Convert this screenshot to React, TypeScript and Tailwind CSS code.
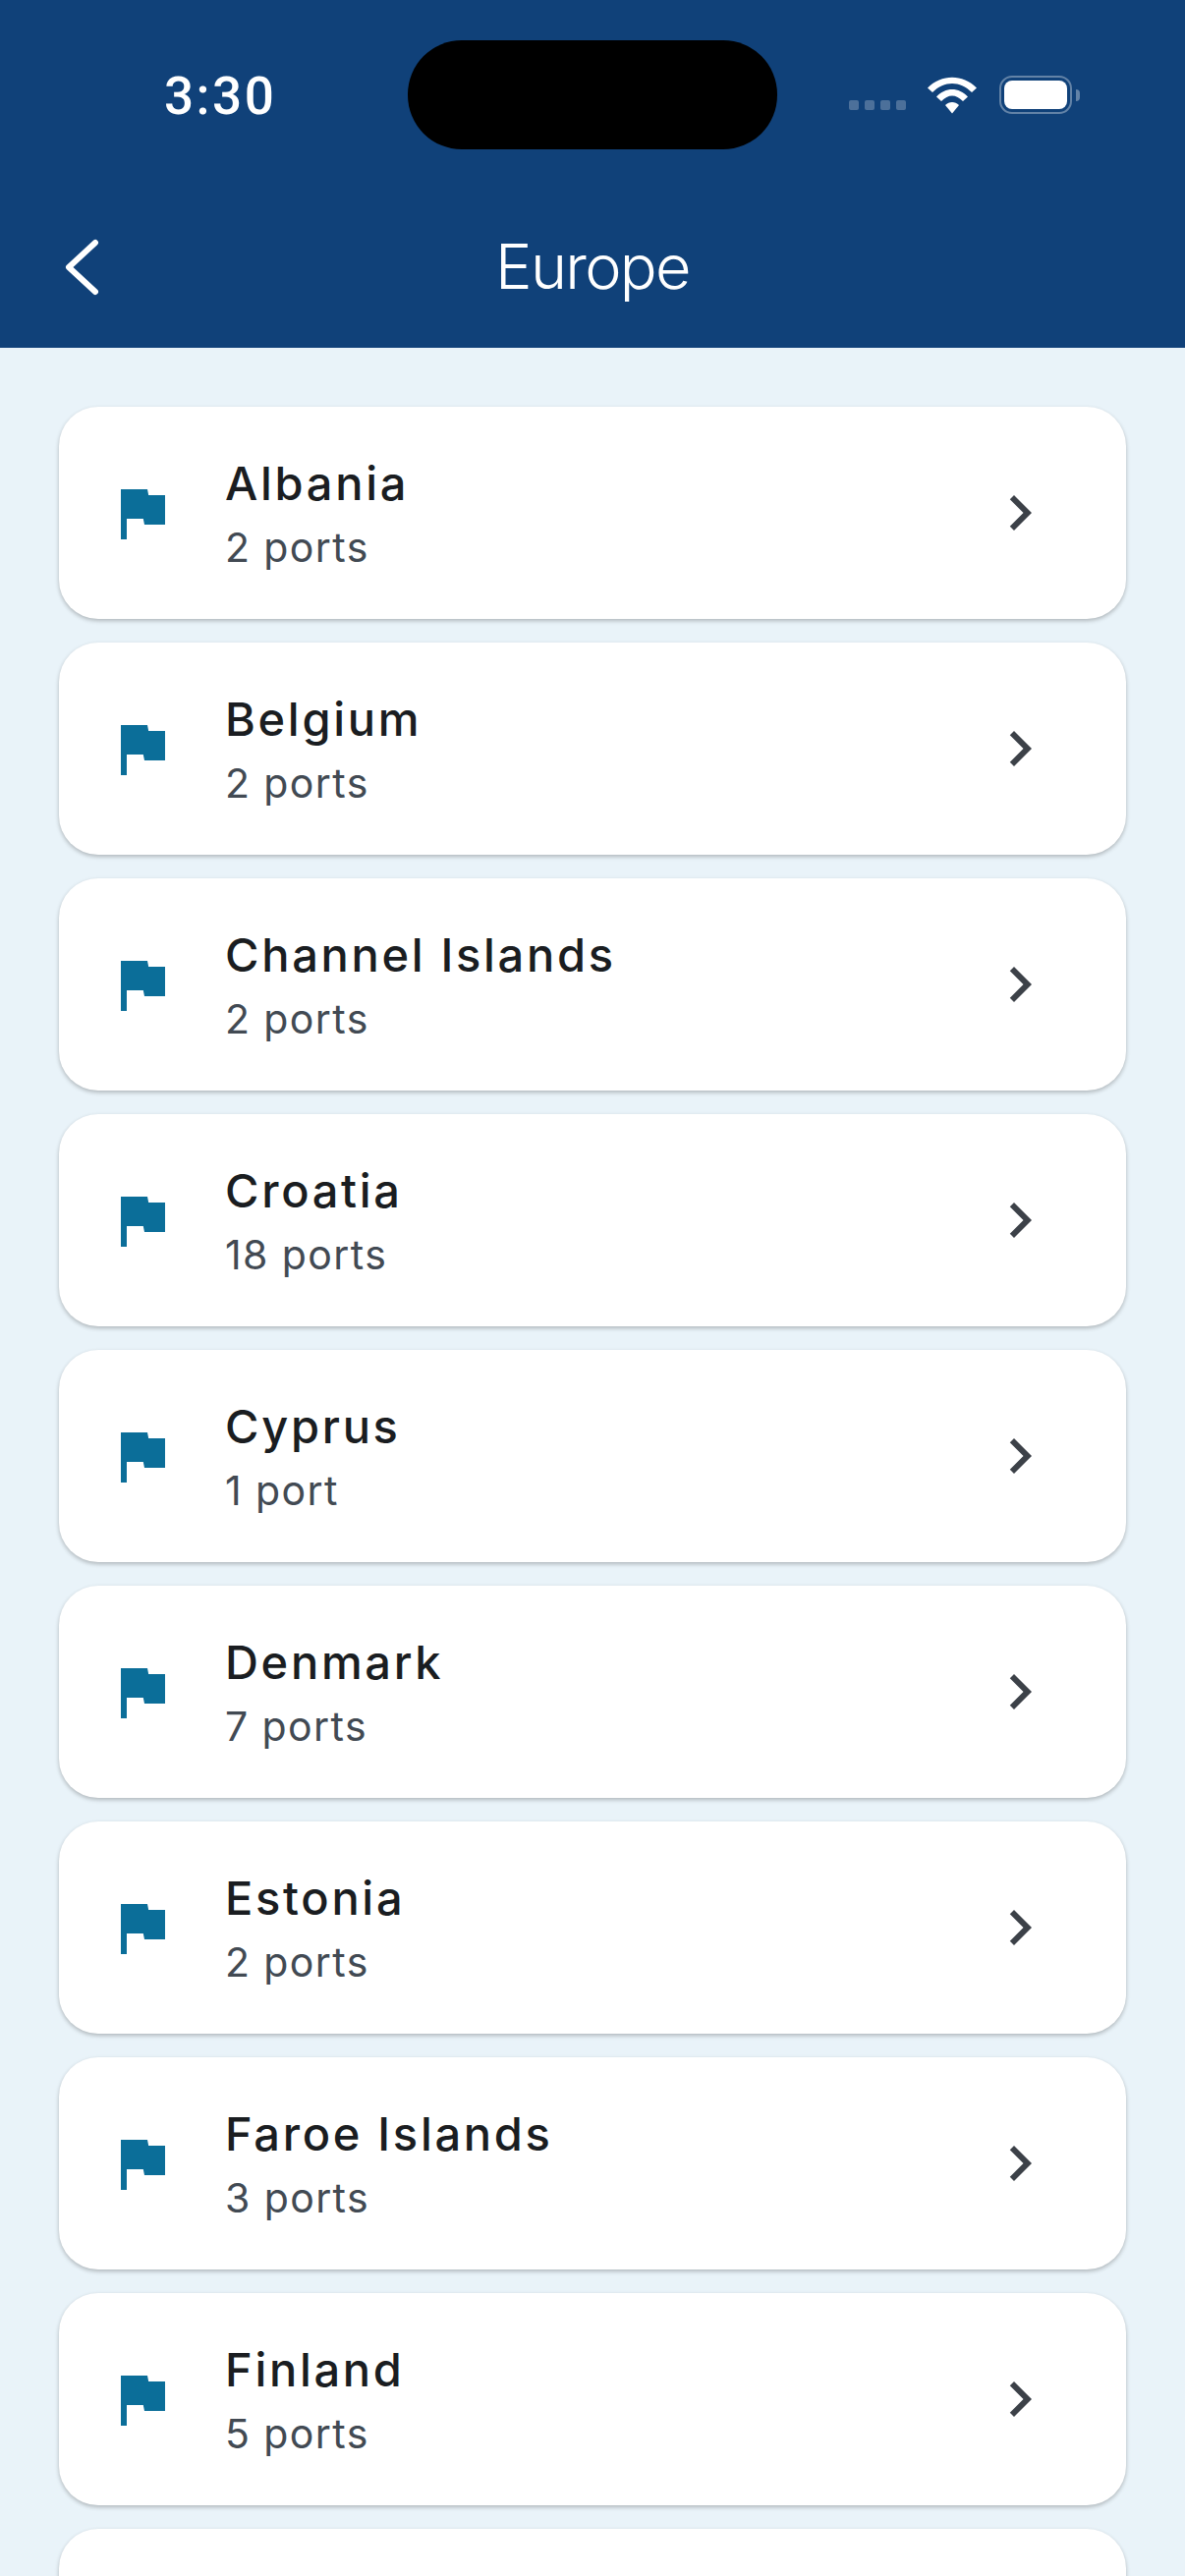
import React from 'react';

const countries = [
  { name: 'Albania', ports: '2 ports' },
  { name: 'Belgium', ports: '2 ports' },
  { name: 'Channel Islands', ports: '2 ports' },
  { name: 'Croatia', ports: '18 ports' },
  { name: 'Cyprus', ports: '1 port' },
  { name: 'Denmark', ports: '7 ports' },
  { name: 'Estonia', ports: '2 ports' },
  { name: 'Faroe Islands', ports: '3 ports' },
  { name: 'Finland', ports: '5 ports' },
];

function StatusIcons() {
  return (
    <div className="flex items-center ml-[73px]">
      {/* Signal dots */}
      <div className="flex gap-[6px] mt-[21px] mr-[22px]">
        <div className="w-[10px] h-[10px] rounded-[2px] bg-white/25" />
        <div className="w-[10px] h-[10px] rounded-[2px] bg-white/25" />
        <div className="w-[10px] h-[10px] rounded-[2px] bg-white/25" />
        <div className="w-[10px] h-[10px] rounded-[2px] bg-white/25" />
      </div>
      <svg width="50" height="38" viewBox="0 0 50 38" className="mr-[23px]" fill="#fff">
        <path d="M0 11.5 C14 -3 36 -3 50 11.5 L45 16 C33 4 17 4 5 16 Z" />
        <path d="M9 20.500 C18 10.5 32 10.5 41 20.500 L36 25 C29 17.500 21 17.500 14 25 Z" />
        <path d="M18 29 C22 25 28 25 32 29 L25 37.500 Z" />
      </svg>
      <div className="w-[74px] h-[39px] rounded-[13px] border-[2.500px] border-white/35 p-[3px] mr-[4px]">
        <div className="w-full h-full rounded-[8px] bg-white" />
      </div>
      <div className="w-[4px] h-[12px] rounded-r-[4px] bg-white/35" />
    </div>
  );
}

function CountryCard({ name, ports }: { name: string; ports: string }) {
  return (
    <div className="h-[216px] bg-white rounded-[40px] flex items-center pl-[48px] pr-[72px] shadow-[0_2px_4px_rgba(0,0,0,0.25)]">
      <svg width="72" height="72" viewBox="0 0 24 24" fill="#0b6e99" className="shrink-0">
        <path d="M14.4 6L14 4H5v17h2v-7h5.6l.4 2h7V6z" />
      </svg>
      <div className="flex-1 ml-[49px]">
        <p className="text-[47px] leading-[64px] font-medium tracking-[2.700px] text-[#1a1d21] mt-[1px]">{name}</p>
        <p className="text-[41px] leading-[58px] mt-[4px] tracking-[1.400px] text-[#424a53]">{ports}</p>
      </div>
      <svg width="72" height="72" viewBox="0 0 24 24" fill="#3c4148" className="shrink-0">
        <path d="M10 6L8.59 7.41 13.17 12l-4.58 4.59L10 18l6-6z" />
      </svg>
    </div>
  );
}

export default function App() {
  return (
    <div className="w-[1206px] h-[2622px] overflow-hidden bg-[#e9f3f9] font-['Inter',sans-serif]">
      {/* Header */}
      <div className="h-[354px] bg-[#104179] flex flex-col">
        <div className="flex items-center h-[111px] mt-[41px] pl-[167px]">
          <span className="w-[248px] font-['Roboto',sans-serif] text-[53px] font-medium tracking-[2.500px] leading-none text-white mt-[4px]">3:30</span>
          <div className="w-[376px] h-[111px] rounded-[55px] bg-black" />
          <StatusIcons />
        </div>
        <div className="flex items-center justify-between pl-[65px] pr-[65px] mt-[88px]">
          <svg width="36" height="60" viewBox="0 0 36 60" fill="none" stroke="#fff" strokeWidth="6" strokeLinecap="round" strokeLinejoin="round">
            <path d="M32 5L5 30L32 55" />
          </svg>
          <h1 className="text-[63px] font-light tracking-[-1.700px] leading-none text-white">Europe</h1>
          <div className="w-[36px]" />
        </div>
      </div>

      {/* Country list */}
      <div className="flex flex-col gap-[24px] px-[60px] pt-[60px]">
        {countries.map((c) => (
          <CountryCard key={c.name} name={c.name} ports={c.ports} />
        ))}
        <div className="h-[216px] bg-white rounded-[40px] shadow-[0_2px_4px_rgba(0,0,0,0.25)]" />
      </div>
    </div>
  );
}
